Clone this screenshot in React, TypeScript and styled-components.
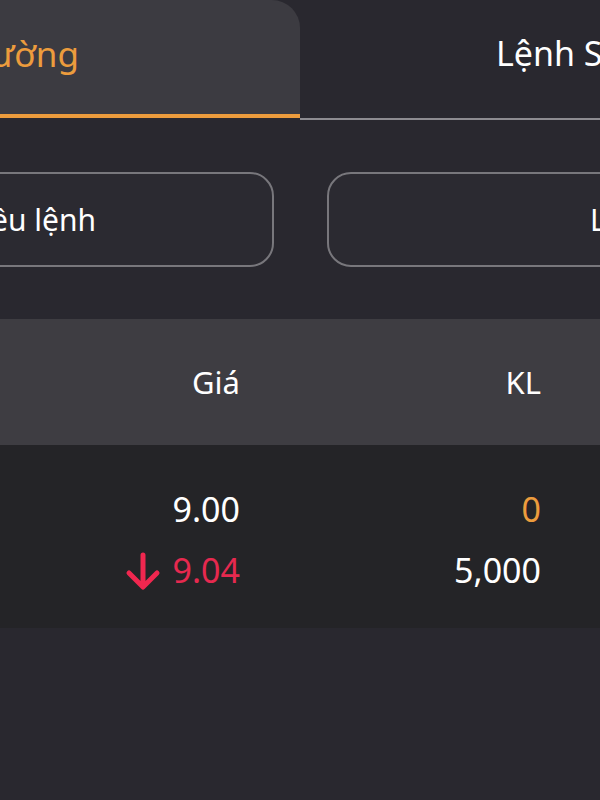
import styled, {createGlobalStyle} from "styled-components";

const GlobalStyle = createGlobalStyle`
  html, body {
    margin: 0;
    padding: 0;
    background: #29282f;
    overflow: hidden;
  }
  * {
    box-sizing: border-box;
  }
`;

interface IOrder {
  price: string;
  volume: string;
  priceTone: 'normal' | 'down';
  volumeTone: 'normal' | 'accent';
}

const orders: IOrder[] = [
  {price: '9.00', volume: '0', priceTone: 'normal', volumeTone: 'accent'},
  {price: '9.04', volume: '5,000', priceTone: 'down', volumeTone: 'normal'},
];

const toneColor = {
  normal: '#ffffff',
  accent: '#ec9c3d',
  down: '#e6294f',
};

const DownArrow = () => (
  <ArrowSvg width="36" height="40" viewBox="0 0 36 40" fill="none">
    <path d="M18 4v31M4 22l14 14 14-14" stroke="#f0274f" strokeWidth="5" strokeLinecap="round" strokeLinejoin="round"/>
  </ArrowSvg>
);

const App = () => {
  return (
    <Page>
      <GlobalStyle/>
      <TabBar>
        <ActiveTab>Thị trường</ActiveTab>
        <Tab>Lệnh Stop</Tab>
      </TabBar>

      <ButtonRow>
        <LeftButton>Điều lệnh</LeftButton>
        <RightButton>Lệnh thường</RightButton>
      </ButtonRow>

      <TableHeader>
        <HeaderCell>Giá</HeaderCell>
        <HeaderCell>KL</HeaderCell>
      </TableHeader>

      <TableBody>
        {orders.map((order) => (
          <Row key={order.price}>
            <ValueCell $tone={order.priceTone}>
              {order.priceTone === 'down' && <DownArrow/>}
              {order.price}
            </ValueCell>
            <ValueCell $tone={order.volumeTone}>{order.volume}</ValueCell>
          </Row>
        ))}
      </TableBody>
    </Page>
  );
};

const Page = styled.div`
  width: 600px;
  height: 800px;
  overflow: hidden;
  background: #29282f;
  font-family: "Noto Sans", "Open Sans", sans-serif;
  color: #ffffff;
`;

const TabBar = styled.div`
  display: flex;
  align-items: flex-start;
  height: 120px;
`;

const ActiveTab = styled.div`
  width: 300px;
  height: 118px;
  flex-shrink: 0;
  display: flex;
  justify-content: flex-end;
  padding: 30px 221px 0 0;
  background: #3c3b41;
  border-top-right-radius: 28px;
  border-bottom: 4px solid #ec9c3d;
  color: #ec9c3d;
  font-size: 35px;
  white-space: nowrap;
  overflow: hidden;
`;

const Tab = styled.div`
  flex: 1;
  height: 120px;
  padding: 30px 0 0 196px;
  border-bottom: 2px solid #8d8c91;
  font-size: 34px;
  white-space: nowrap;
  overflow: hidden;
`;

const ButtonRow = styled.div`
  display: flex;
  gap: 53px;
  margin-top: 52px;
`;

const OutlineButton = styled.div`
  flex-shrink: 0;
  width: 320px;
  height: 95px;
  display: flex;
  align-items: center;
  border: 2px solid #78777c;
  border-radius: 24px;
  background: #2b2a31;
  font-size: 30px;
  white-space: nowrap;
  overflow: hidden;
`;

const LeftButton = styled(OutlineButton)`
  margin-left: -46px;
  justify-content: flex-end;
  padding-right: 176px;
`;

const RightButton = styled(OutlineButton)`
  padding-left: 261px;
`;

const TableHeader = styled.div`
  display: grid;
  grid-template-columns: 240px 301px;
  align-items: center;
  height: 126px;
  margin-top: 52px;
  background: #3e3d42;
`;

const HeaderCell = styled.div`
  text-align: right;
  font-size: 31px;
`;

const TableBody = styled.div`
  height: 183px;
  padding-top: 34px;
  background: #242427;
`;

const Row = styled.div`
  display: grid;
  grid-template-columns: 240px 301px;
  height: 61px;
  align-items: center;
`;

const ValueCell = styled.div<{ $tone: keyof typeof toneColor }>`
  display: flex;
  justify-content: flex-end;
  align-items: center;
  gap: 12px;
  font-size: 34px;
  line-height: 61px;
  color: ${({$tone}) => toneColor[$tone]};
`;

const ArrowSvg = styled.svg`
  display: block;
  margin-left: -4px;
`;

export default App;
